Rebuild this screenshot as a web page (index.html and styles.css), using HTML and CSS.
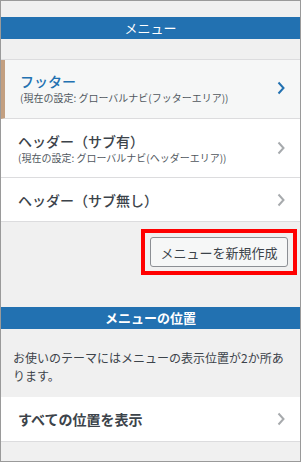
FILE: index.html
```html
<!DOCTYPE html>
<html lang="ja">
<head>
  <meta charset="UTF-8">
  <meta name="viewport" content="width=device-width, initial-scale=1.0">
  <title>メニュー</title>
  <link rel="stylesheet" href="styles.css">
</head>
<body>
  <div class="panel">
    <h2 class="section-title">メニュー</h2>

    <ul class="menu-list">
      <li class="menu-item current">
        <div class="item-text">
          <span class="item-name">フッター</span>
          <span class="item-note">(現在の設定: グローバルナビ(フッターエリア))</span>
        </div>
        <svg class="chevron" width="8" height="14" viewBox="0 0 8 14"><path d="M1.5 1.5 L6.5 7 L1.5 12.5" /></svg>
      </li>
      <li class="menu-item">
        <div class="item-text">
          <span class="item-name">ヘッダー（サブ有）</span>
          <span class="item-note">(現在の設定: グローバルナビ(ヘッダーエリア))</span>
        </div>
        <svg class="chevron" width="8" height="14" viewBox="0 0 8 14"><path d="M1.5 1.5 L6.5 7 L1.5 12.5" /></svg>
      </li>
      <li class="menu-item single">
        <div class="item-text">
          <span class="item-name">ヘッダー（サブ無し）</span>
        </div>
        <svg class="chevron" width="8" height="14" viewBox="0 0 8 14"><path d="M1.5 1.5 L6.5 7 L1.5 12.5" /></svg>
      </li>
    </ul>

    <div class="actions">
      <div class="highlight">
        <button type="button" class="new-button">メニューを新規作成</button>
      </div>
    </div>

    <h2 class="section-title bold">メニューの位置</h2>
    <p class="description">お使いのテーマにはメニューの表示位置が2か所あります。</p>

    <ul class="menu-list plain">
      <li class="menu-item single strong">
        <div class="item-text">
          <span class="item-name">すべての位置を表示</span>
        </div>
        <svg class="chevron" width="8" height="14" viewBox="0 0 8 14"><path d="M1.5 1.5 L6.5 7 L1.5 12.5" /></svg>
      </li>
    </ul>
  </div>
</body>
</html>
```

FILE: styles.css
```css
html, body {
  margin: 0;
  padding: 0;
}
body {
  font-family: "Noto Sans CJK JP", "Noto Sans", sans-serif;
  color: #3c434a;
}
.panel {
  box-sizing: border-box;
  width: 301px;
  height: 462px;
  border: 1px solid #9a9a9a;
  background-color: #f0f0f0;
  padding-top: 16px;
  overflow: hidden;
}
.section-title {
  margin: 0;
  height: 22px;
  line-height: 22px;
  background-color: #2271b1;
  color: #fff;
  font-size: 13px;
  font-weight: 400;
  text-align: center;
}
.section-title.bold {
  font-weight: 700;
  margin-top: 32px;
}
.menu-list {
  list-style: none;
  margin: 20px 0 0;
  padding: 0;
  border-top: 1px solid #dcdcde;
}
.menu-list.plain {
  margin-top: 12px;
  border-top: none;
}
.menu-item {
  display: flex;
  align-items: center;
  justify-content: space-between;
  padding: 12px 15px 12px 17px;
  background-color: #fff;
  border-bottom: 1px solid #dcdcde;
}
.menu-item.current {
  background-color: #f6f7f7;
  border-left: 4px solid #c3a081;
  padding-left: 15px;
  padding-top: 11px;
  padding-bottom: 13px;
}
.menu-item.single {
  padding-top: 12px;
  padding-bottom: 11px;
}
.menu-item.strong {
  padding-top: 12px;
  padding-bottom: 12px;
}
.item-text {
  display: flex;
  flex-direction: column;
}
.item-name {
  font-size: 14px;
  line-height: 20px;
  font-weight: 500;
}
.current .item-name {
  color: #2271b1;
}
.strong .item-name {
  font-weight: 700;
}
.item-note {
  font-size: 10px;
  line-height: 14px;
  color: #50575e;
}
.chevron {
  flex: none;
}
.chevron path {
  fill: none;
  stroke: #a7aaad;
  stroke-width: 2;
}
.current .chevron path {
  stroke: #2271b1;
}
.actions {
  display: flex;
  justify-content: flex-end;
  padding: 7px 3px 0 0;
}
.highlight {
  border: 4px solid #ff0000;
  padding: 4px 5px;
}
.new-button {
  display: block;
  box-sizing: border-box;
  width: 138px;
  height: 30px;
  padding: 0;
  font-family: inherit;
  font-size: 13px;
  color: #3c434a;
  background-color: #f6f7f7;
  border: 1px solid #8c8f94;
  border-radius: 3px;
}
.description {
  margin: 20px 0 0;
  padding: 0 12px;
  font-size: 12px;
  line-height: 18px;
}
```
